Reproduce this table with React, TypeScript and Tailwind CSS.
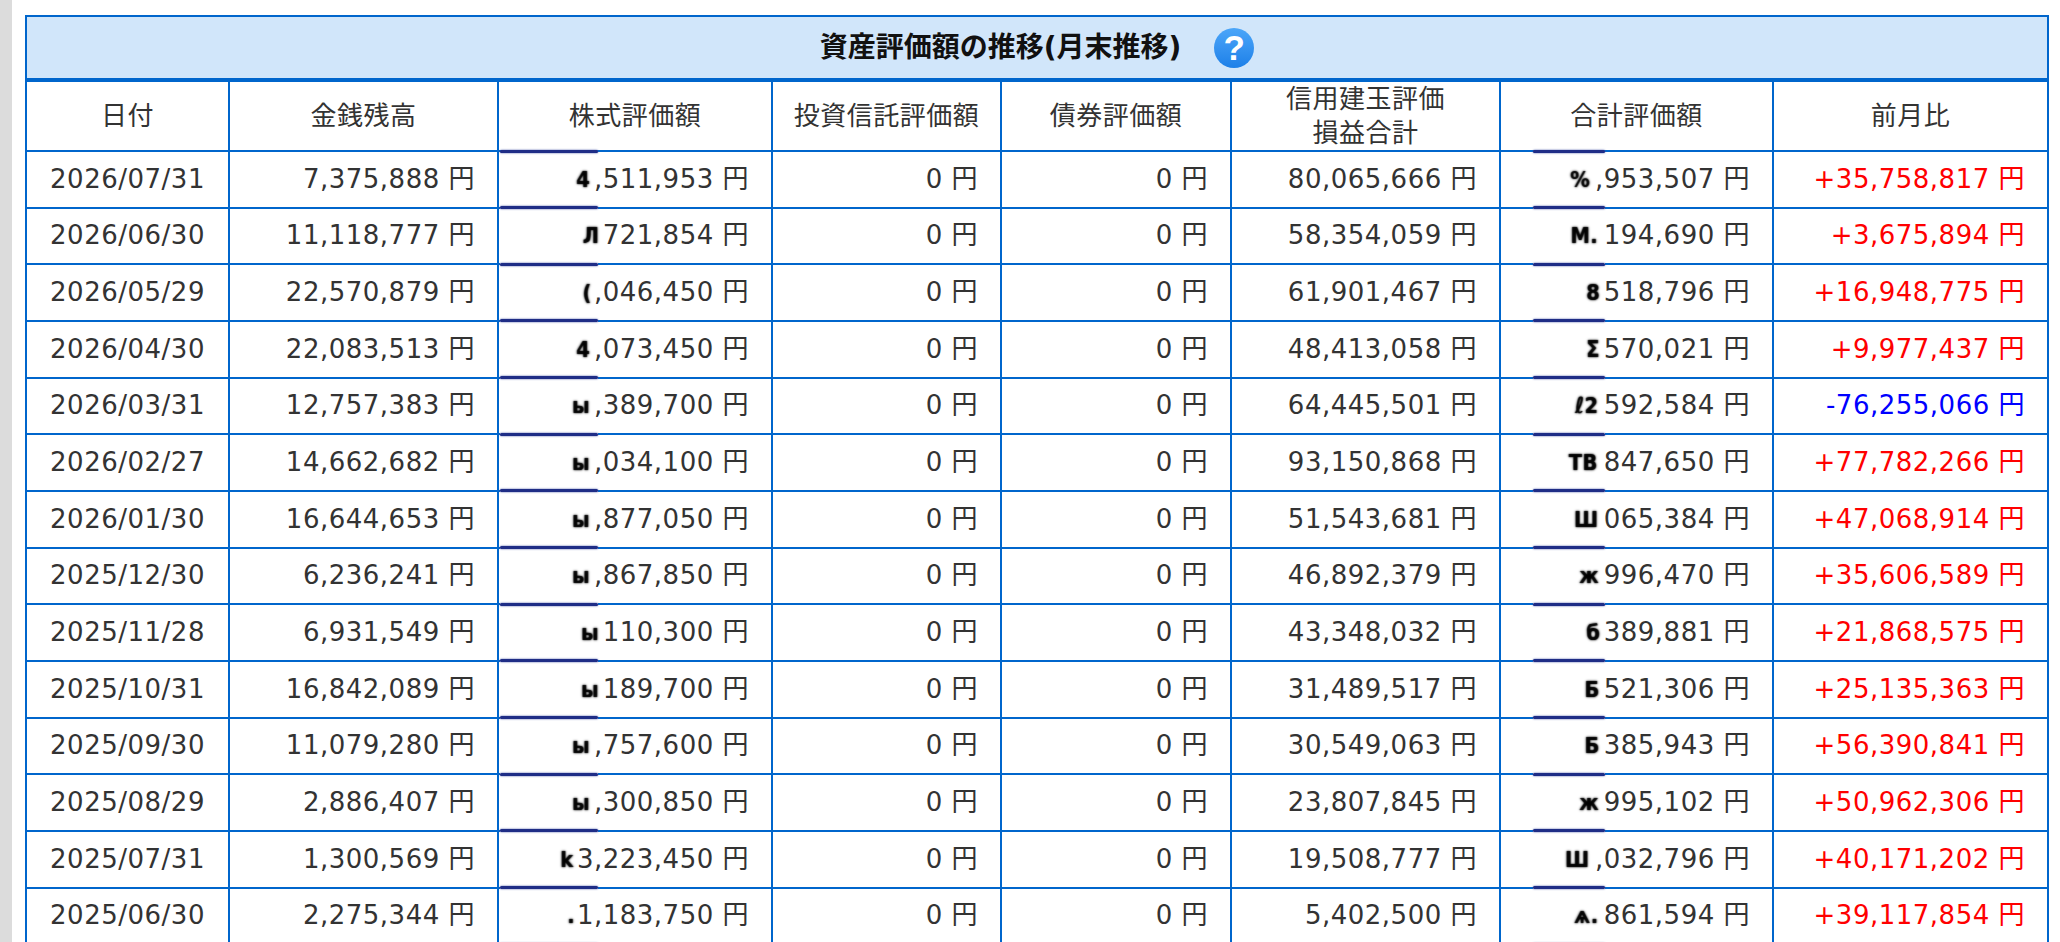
import React from "react";

type Row = {
  date: string;
  cash: string;
  stockSmudge: string;
  stock: string;
  margin: string;
  totalSmudge: string;
  total: string;
  diff: string;
};

const rows: Row[] = [
  { date: "2026/07/31", cash: "7,375,888", stockSmudge: "4", stock: ",511,953", margin: "80,065,666", totalSmudge: "%", total: ",953,507", diff: "+35,758,817" },
  { date: "2026/06/30", cash: "11,118,777", stockSmudge: "Л", stock: "721,854", margin: "58,354,059", totalSmudge: "M.", total: "194,690", diff: "+3,675,894" },
  { date: "2026/05/29", cash: "22,570,879", stockSmudge: "(", stock: ",046,450", margin: "61,901,467", totalSmudge: "8", total: "518,796", diff: "+16,948,775" },
  { date: "2026/04/30", cash: "22,083,513", stockSmudge: "4", stock: ",073,450", margin: "48,413,058", totalSmudge: "Σ", total: "570,021", diff: "+9,977,437" },
  { date: "2026/03/31", cash: "12,757,383", stockSmudge: "ы", stock: ",389,700", margin: "64,445,501", totalSmudge: "ℓ2", total: "592,584", diff: "-76,255,066" },
  { date: "2026/02/27", cash: "14,662,682", stockSmudge: "ы", stock: ",034,100", margin: "93,150,868", totalSmudge: "ТВ", total: "847,650", diff: "+77,782,266" },
  { date: "2026/01/30", cash: "16,644,653", stockSmudge: "ы", stock: ",877,050", margin: "51,543,681", totalSmudge: "Ш", total: "065,384", diff: "+47,068,914" },
  { date: "2025/12/30", cash: "6,236,241", stockSmudge: "ы", stock: ",867,850", margin: "46,892,379", totalSmudge: "ж", total: "996,470", diff: "+35,606,589" },
  { date: "2025/11/28", cash: "6,931,549", stockSmudge: "ы", stock: "110,300", margin: "43,348,032", totalSmudge: "б", total: "389,881", diff: "+21,868,575" },
  { date: "2025/10/31", cash: "16,842,089", stockSmudge: "ы", stock: "189,700", margin: "31,489,517", totalSmudge: "Б", total: "521,306", diff: "+25,135,363" },
  { date: "2025/09/30", cash: "11,079,280", stockSmudge: "ы", stock: ",757,600", margin: "30,549,063", totalSmudge: "Б", total: "385,943", diff: "+56,390,841" },
  { date: "2025/08/29", cash: "2,886,407", stockSmudge: "ы", stock: ",300,850", margin: "23,807,845", totalSmudge: "ж", total: "995,102", diff: "+50,962,306" },
  { date: "2025/07/31", cash: "1,300,569", stockSmudge: "k", stock: "3,223,450", margin: "19,508,777", totalSmudge: "Ш", total: ",032,796", diff: "+40,171,202" },
  { date: "2025/06/30", cash: "2,275,344", stockSmudge: ".", stock: "1,183,750", margin: "5,402,500", totalSmudge: "ѧ.", total: "861,594", diff: "+39,117,854" },
];

const grid =
  "grid grid-cols-[203px_269px_274px_229px_230px_269px_273px_275px]";
const cellBase = "border-r-2 border-b-2 border-[#0066cc]";

function Yen({ v }: { v: string }) {
  return <span>{v} 円</span>;
}

function Masked({
  smudge,
  value,
  left,
  width,
  first,
}: {
  smudge: string;
  value: string;
  left: string;
  width: string;
  first: boolean;
}) {
  return (
    <div className={`${cellBase} relative flex h-[56.67px] items-center justify-end pr-[22px]`}>
      <div className={`absolute ${left} ${width} top-0 bottom-[-2px] bg-white`} />
      {first && (
        <div
          className={`absolute z-10 ${left} ${width} top-[-2.5px] h-[3px] rounded-full bg-[#1f2d86] shadow-[0_0_2px_#3a4aa0]`}
        />
      )}
      <div
        className={`absolute z-10 ${left} ${width} bottom-[-2.5px] h-[3px] rounded-full bg-[#1f2d86] shadow-[0_0_2px_#3a4aa0]`}
      />
      <span
        className="relative mr-[1px] inline-block font-bold text-[#ffffff00] [text-shadow:0_0_3px_#000,0_0_1px_#222] scale-x-[0.75] scale-y-[0.85]"
      >
        {smudge}
      </span>
      <span className="relative">
        <Yen v={value} />
      </span>
    </div>
  );
}

export default function App() {
  return (
    <div className="flex min-h-screen bg-white font-['DejaVu_Sans','Noto_Sans_CJK_JP',sans-serif] text-[#333333]">
      <div className="w-[12px] shrink-0 self-stretch bg-[#dcdcdc]" />
      <div className="pl-[13px] pt-[15px]">
        <div className="w-[2024px] border-l-2 border-t-2 border-[#0066cc]">
          <div className="flex h-[65px] items-center justify-center gap-[33px] border-r-2 border-b-4 border-[#0066cc] bg-[#d1e6fa]">
            <span className="text-[28px] font-bold leading-none text-[#111]">
              資産評価額の推移(月末推移)
            </span>
            <span className="flex h-[40px] w-[40px] items-center justify-center rounded-full bg-gradient-to-b from-[#4ba6f9] to-[#1c80e8] font-['Liberation_Sans',sans-serif] text-[35px] font-bold leading-none text-white">
              ?
            </span>
          </div>

          <div className={`${grid} text-[26px] tracking-[0.5px]`}>
            {[
              ["日付"],
              ["金銭残高"],
              ["株式評価額"],
              ["投資信託評価額"],
              ["債券評価額"],
              ["信用建玉評価", "損益合計"],
              ["合計評価額"],
              ["前月比"],
            ].map((lines, i) => (
              <div
                key={i}
                className={`${cellBase} flex h-[70px] flex-col items-center justify-center text-center leading-[34px]`}
              >
                {lines.map((l) => (
                  <span key={l}>{l}</span>
                ))}
              </div>
            ))}

            {rows.map((r, ri) => (
              <React.Fragment key={r.date}>
                <div className={`${cellBase} flex h-[56.67px] items-center justify-center`}>
                  {r.date}
                </div>
                <div className={`${cellBase} flex h-[56.67px] items-center justify-end pr-[22px]`}>
                  <Yen v={r.cash} />
                </div>
                <Masked
                  smudge={r.stockSmudge}
                  value={r.stock}
                  left="left-[1px]"
                  width="w-[98px]"
                  first={ri === 0}
                />
                <div className={`${cellBase} flex h-[56.67px] items-center justify-end pr-[22px]`}>
                  <Yen v="0" />
                </div>
                <div className={`${cellBase} flex h-[56.67px] items-center justify-end pr-[22px]`}>
                  <Yen v="0" />
                </div>
                <div className={`${cellBase} flex h-[56.67px] items-center justify-end pr-[22px]`}>
                  <Yen v={r.margin} />
                </div>
                <Masked
                  smudge={r.totalSmudge}
                  value={r.total}
                  left="left-[32px]"
                  width="w-[72px]"
                  first={ri === 0}
                />
                <div
                  className={`${cellBase} flex h-[56.67px] items-center justify-end pr-[22px] ${
                    r.diff.startsWith("-") ? "text-[#0000ff]" : "text-[#ff0000]"
                  }`}
                >
                  <Yen v={r.diff} />
                </div>
              </React.Fragment>
            ))}
          </div>
        </div>
      </div>
    </div>
  );
}
